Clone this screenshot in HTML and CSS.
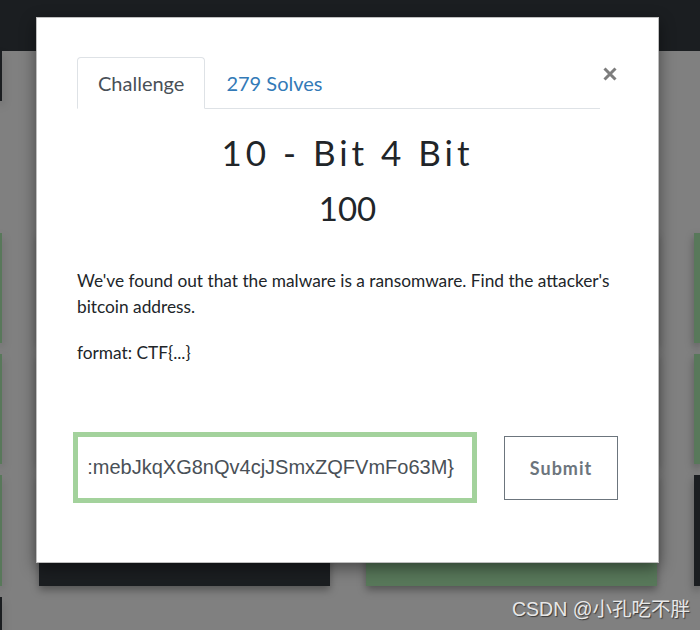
FILE: index.html
```html
<!DOCTYPE html>
<html lang="en">
<head>
  <meta charset="UTF-8">
  <title>10 - Bit 4 Bit</title>
  <link rel="stylesheet" href="styles.css">
</head>
<body>
  <div class="page">
    <div class="topbar"></div>

    <!-- board of challenge cards behind the modal -->
    <div class="board board-head">
      <div class="card dark"></div>
    </div>
    <div class="board">
      <div class="card green"></div>
      <div class="card green"></div>
      <div class="card green"></div>
      <div class="card green"></div>

      <div class="card green"></div>
      <div class="card green"></div>
      <div class="card green"></div>
      <div class="card green"></div>

      <div class="card green"></div>
      <div class="card dark"></div>
      <div class="card green"></div>
      <div class="card dark"></div>

      <div class="card dark"></div>
    </div>
  </div>

  <!-- Challenge modal -->
  <div class="modal">
    <div class="modal-head">
      <ul class="tabs">
        <li class="tab active">Challenge</li>
        <li class="tab"><a href="#">279 Solves</a></li>
      </ul>
      <button class="close" type="button" aria-label="Close">
        <svg width="14" height="14" viewBox="0 0 14 14">
          <path d="M1.5 1.5 L12.5 12.5 M12.5 1.5 L1.5 12.5" stroke="#7d7d7d" stroke-width="3"/>
        </svg>
      </button>
    </div>

    <h2 class="title">10 - Bit 4 Bit</h2>
    <h3 class="points">100</h3>

    <div class="desc">
      <p>We've found out that the malware is a ransomware. Find the attacker's bitcoin address.</p>
      <p>format: CTF{...}</p>
    </div>

    <form class="submit-row" onsubmit="event.preventDefault()">
      <div class="flag-input">
        <span class="flag-text">:mebJkqXG8nQv4cjJSmxZQFVmFo63M}</span>
      </div>
      <button class="submit" type="submit">Submit</button>
    </form>
  </div>

  <div class="watermark">CSDN @小孔吃不胖</div>
</body>
</html>
```

FILE: styles.css
```css
/* Reset some default styles */
* {
  margin: 0;
  padding: 0;
  box-sizing: border-box;
}

body {
  font-family: 'Lato', 'Open Sans', sans-serif;
  background: #808080;
  width: 700px;
  height: 630px;
  overflow: hidden;
  position: relative;
}

.topbar {
  height: 51px;
  background: #1b1e21;
}

/* card grid behind the modal, edge columns are cut by the window */
.board {
  display: grid;
  grid-template-columns: 2px 291px 291px 1fr;
  grid-template-rows: 110px 110px 111px 34px;
  column-gap: 36.5px;
  row-gap: 11px;
  margin-top: 132px;
}

.board-head {
  margin-top: 0;
  grid-template-rows: 50px;
}

.card {
  box-shadow: 0 4px 8px rgba(0, 0, 0, 0.35);
}

.card.dark {
  background: #1b1e21;
}

.card.green {
  background: #58785a;
}

/* modal */
.modal {
  position: absolute;
  top: 17px;
  left: 36px;
  width: 623px;
  height: 546px;
  background: #fff;
  border: 1px solid rgba(0, 0, 0, 0.25);
  box-shadow: 0 5px 15px rgba(0, 0, 0, 0.45);
  padding: 39px 40px;
}

.modal-head {
  display: flex;
  align-items: flex-start;
}

.tabs {
  flex: 1;
  display: flex;
  list-style: none;
  border-bottom: 1px solid #dee2e6;
}

.tab {
  padding: 12px 20px;
  font-size: 20px;
  line-height: 26px;
  color: #495057;
  border: 1px solid transparent;
  border-radius: 4px 4px 0 0;
  margin-bottom: -1px;
}

.tab.active {
  border-color: #dee2e6 #dee2e6 #fff;
  background: #fff;
}

.tab a {
  color: #337ab7;
  text-decoration: none;
}

.close {
  background: none;
  border: none;
  margin: 10px 1px 0 3px;
  width: 14px;
  height: 14px;
  cursor: pointer;
}

.close svg {
  display: block;
}

.title {
  text-align: center;
  font-weight: 400;
  font-size: 35px;
  letter-spacing: 4px;
  line-height: 42px;
  color: #212529;
  margin-top: 22px;
}

.points {
  text-align: center;
  font-weight: 400;
  font-size: 33px;
  line-height: 40px;
  color: #212529;
  margin-top: 15px;
}

.desc {
  margin-top: 40px;
  font-size: 17.3px;
  line-height: 26px;
  color: #212529;
}

.desc p {
  margin-bottom: 20px;
}

.submit-row {
  display: flex;
  align-items: center;
  margin-top: 66px;
  margin-left: -4px;
}

.flag-input {
  width: 404px;
  height: 71px;
  flex-shrink: 0;
  border: 5px solid #a3d29c;
  display: flex;
  align-items: center;
  justify-content: flex-end;
  overflow: hidden;
  padding-right: 18px;
}

.flag-text {
  font-family: 'Liberation Sans', Arial, sans-serif;
  font-size: 20px;
  color: #495057;
  white-space: nowrap;
}

.submit {
  margin-left: 27px;
  width: 115px;
  height: 64px;
  background: #fff;
  border: 1px solid #6c757d;
  color: #6c757d;
  font-family: 'Lato', sans-serif;
  font-weight: 700;
  font-size: 18px;
  letter-spacing: 1px;
  cursor: pointer;
}

.watermark {
  position: absolute;
  right: 10px;
  bottom: 8px;
  font-family: 'Liberation Sans', 'Noto Sans CJK SC', sans-serif;
  font-size: 19.5px;
  color: #e8e8e8;
  text-shadow: 1px 1px 1px #3a3a3a;
}
```
